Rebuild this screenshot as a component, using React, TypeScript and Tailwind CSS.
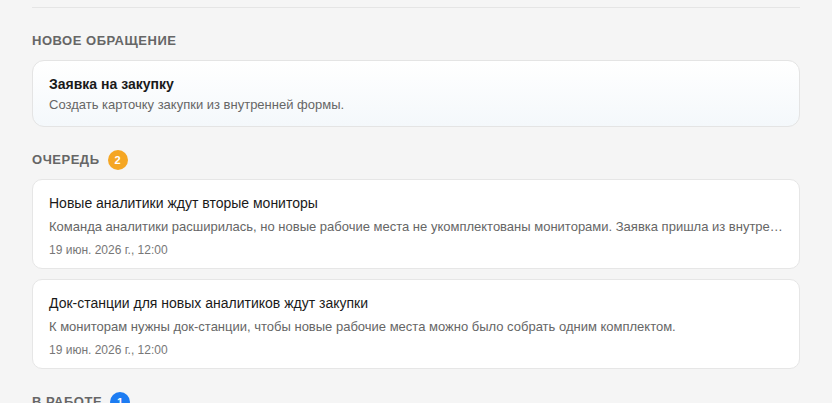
import React from "react";

type Ticket = {
  title: string;
  text: string;
  date: string;
};

const queue: Ticket[] = [
  {
    title: "Новые аналитики ждут вторые мониторы",
    text: "Команда аналитики расширилась, но новые рабочие места не укомплектованы мониторами. Заявка пришла из внутренней формы закупок и ждёт согласования.",
    date: "19 июн. 2026 г., 12:00",
  },
  {
    title: "Док-станции для новых аналитиков ждут закупки",
    text: "К мониторам нужны док-станции, чтобы новые рабочие места можно было собрать одним комплектом.",
    date: "19 июн. 2026 г., 12:00",
  },
];

function SectionTitle({ label, count, color }: { label: string; count?: number; color?: string }) {
  return (
    <div className="flex items-center gap-2 h-5 mb-[9px]">
      <h2 className="text-[13px] font-bold uppercase tracking-[0.04em] text-[#666666] leading-4">{label}</h2>
      {count !== undefined && (
        <span
          className={`flex items-center justify-center w-5 h-5 rounded-full text-[11px] font-bold text-white ${color}`}
        >
          {count}
        </span>
      )}
    </div>
  );
}

function TicketCard({ t }: { t: Ticket }) {
  return (
    <div className="bg-white border border-[#e6e6e6] rounded-[10px] px-4 pt-[13px] pb-[10px]">
      <div className="text-[14px] leading-5 text-[#1a1a1a]">{t.title}</div>
      <div className="mt-[5px] text-[13px] leading-[18px] text-[#666666] truncate">{t.text}</div>
      <div className="mt-[6px] text-[12px] leading-4 text-[#777777]">{t.date}</div>
    </div>
  );
}

export default function App() {
  return (
    <div
      className="min-h-screen bg-[#f5f5f5] px-8"
      style={{ fontFamily: '"Liberation Sans", Arial, sans-serif' }}
    >
      <div className="h-2 border-b border-[#e5e5e5]" />

      <section className="pt-[23px]">
        <SectionTitle label="Новое обращение" />
        <div className="rounded-xl border border-[#e4e4e4] bg-gradient-to-b from-white to-[#f4f8fb] px-4 pt-[13px] pb-3">
          <div className="text-[14px] font-bold leading-5 text-[#1a1a1a]">Заявка на закупку</div>
          <div className="mt-0.5 text-[13px] leading-[18px] text-[#666666]">
            Создать карточку закупки из внутренней формы.
          </div>
        </div>
      </section>

      <section className="pt-[23px]">
        <SectionTitle label="Очередь" count={2} color="bg-[#f5a623]" />
        <div className="flex flex-col gap-2.5">
          {queue.map((t) => (
            <TicketCard key={t.title} t={t} />
          ))}
        </div>
      </section>

      <section className="pt-[23px]">
        <SectionTitle label="В работе" count={1} color="bg-[#1d7cf2]" />
      </section>
    </div>
  );
}
